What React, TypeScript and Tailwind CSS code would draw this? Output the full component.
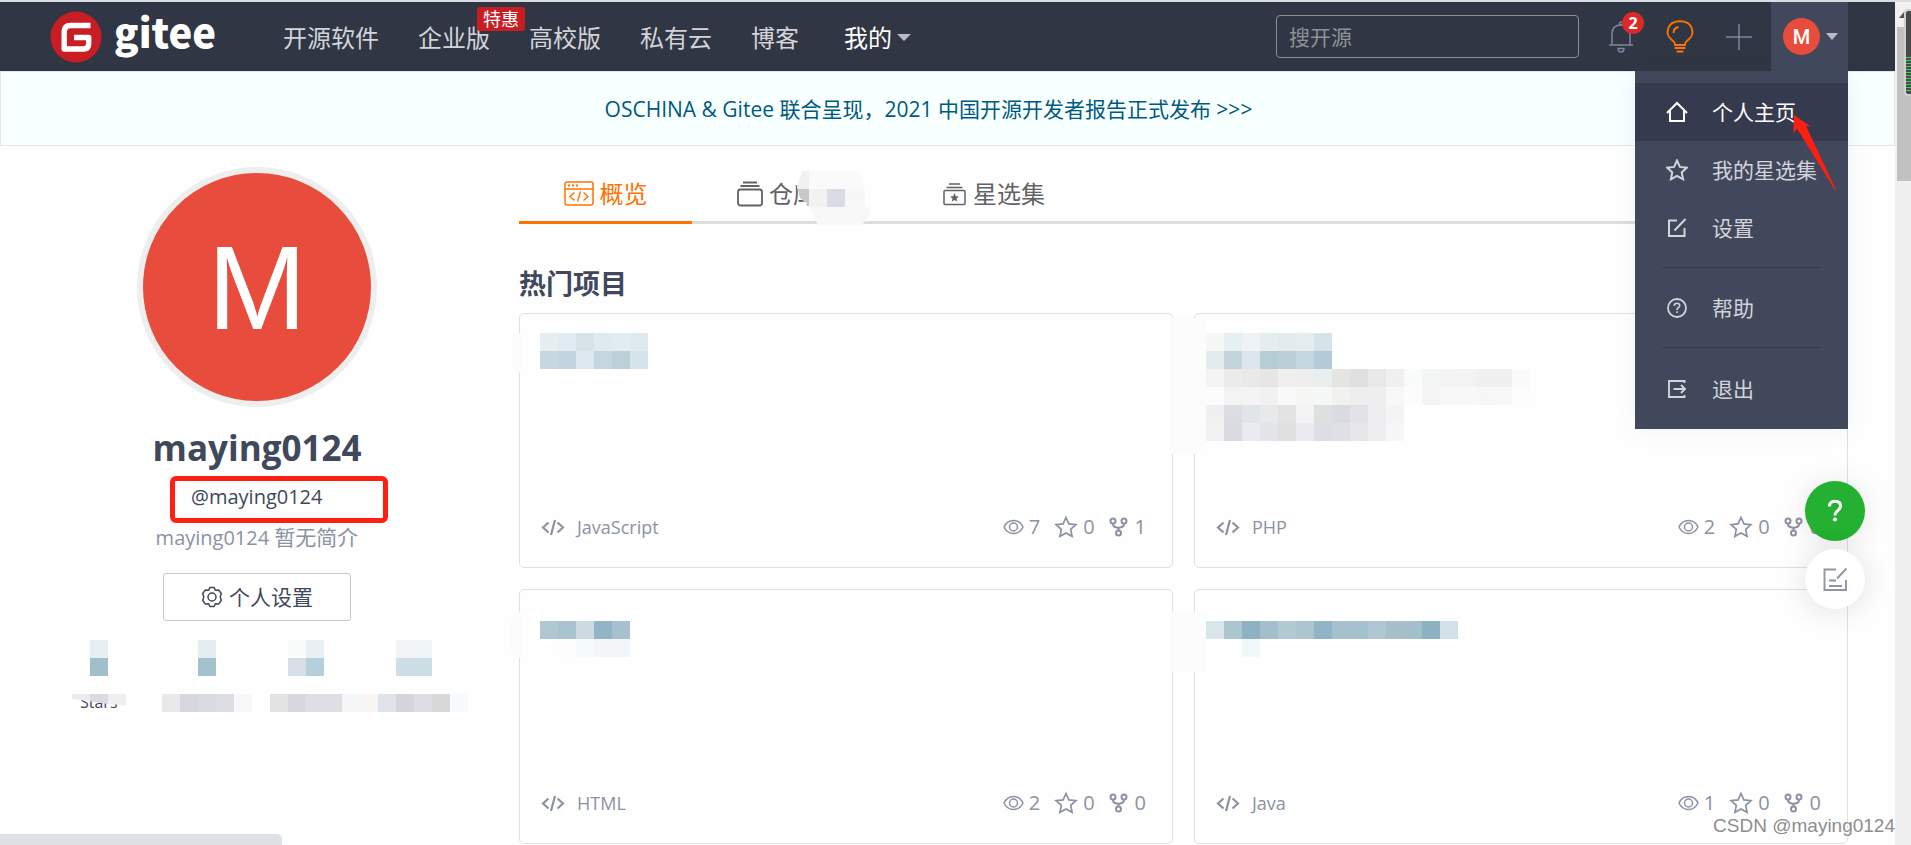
import type { ReactNode } from "react";

type Cell = string | null;

function Svg({ w, h, box, className, children }: { w: number; h: number; box?: string; className?: string; children: ReactNode }) {
  return (
    <svg
      width={w}
      height={h}
      viewBox={box ?? `0 0 ${w} ${h}`}
      fill="none"
      stroke="currentColor"
      strokeWidth="2"
      aria-hidden="true"
      className={className ? `shrink-0 ${className}` : "shrink-0"}
    >
      {children}
    </svg>
  );
}

const STAR = "M12 2.5 14.9 8.9 21.9 9.7 16.7 14.4 18.1 21.3 12 17.9 5.9 21.3 7.3 14.4 2.1 9.7 9.1 8.9Z";

function Mosaic({ rows }: { rows: Cell[][] }) {
  return (
    <div aria-hidden="true">
      {rows.map((row, r) => (
        <div key={r} className="flex h-[18px]">
          {row.map((c, i) => (
            <div key={i} className="size-[18px]" style={{ backgroundColor: c ?? "transparent" }} />
          ))}
        </div>
      ))}
    </div>
  );
}

function Caret({ className }: { className: string }) {
  return <span aria-hidden="true" className={`border-t-[7px] border-x-transparent border-t-[#b9bcc4] ${className}`} />;
}

function Header() {
  return (
    <header className="flex h-[69px] items-center bg-[#303643] px-[47px]">
      <a href="#home" aria-label="gitee" className="flex items-center gap-3 pl-[3px] text-white">
        <svg width="52" height="52" viewBox="0 0 52 52" aria-hidden="true" className="shrink-0">
          <circle cx="26" cy="26" r="25.5" fill="#c71d23" />
          <path
            d="M40.5 14.5H20.5Q14.2 14.5 14.2 21V38H33.5Q38.7 38 38.7 32.5V26.5H24"
            fill="none"
            stroke="#fff"
            strokeWidth="5.4"
            strokeLinejoin="round"
          />
        </svg>
        <span className="pb-3 font-['Noto_Sans_CJK_SC',sans-serif] text-[40px] leading-[52px] font-black">gitee</span>
      </a>
      <nav className="ml-[67px] flex items-center gap-[39px] pt-[2px] text-2xl leading-9 whitespace-nowrap text-[#d3d4d8]">
        <a href="#explore">开源软件</a>
        <a href="#enterprise" className="relative">
          企业版
          <span className="absolute -top-[13px] left-[59px] h-6 rounded-[3px] bg-[#c71d23] px-[6px] text-lg leading-6 text-white">特惠</span>
        </a>
        <a href="#education">高校版</a>
        <a href="#private">私有云</a>
        <a href="#blog">博客</a>
        <button type="button" className="flex items-center pl-[6px] text-white">
          我的
          <Caret className="ml-[5px] border-x-[7px]" />
        </button>
      </nav>
      <div className="ml-auto flex h-full items-center">
        <input
          type="search"
          aria-label="搜开源"
          placeholder="搜开源"
          className="h-[43px] w-[303px] rounded-[4px] border border-[#8b8e97] bg-transparent px-3 text-[21px] text-white placeholder:text-[#8f9299]"
        />
        <div className="ml-[29px] flex items-center gap-8">
          <button type="button" aria-label="通知" className="relative text-[#7d87a3]">
            <Svg w={26} h={32}>
              <path d="M1 24H25M4 24V13Q4 4 13 4Q22 4 22 13V24" strokeWidth="1.5" />
              <circle cx="13" cy="2.6" r="1.6" strokeWidth="1.3" />
              <path d="M10 27.5H16Q16 31 13 31Q10 31 10 27.5Z" strokeWidth="1.4" />
            </Svg>
            <span className="absolute -top-[9px] left-[14px] size-[22px] rounded-full bg-[#db2828] text-center text-base leading-[22px] font-bold text-white">2</span>
          </button>
          <button type="button" aria-label="灯泡" className="text-[#fe7300]">
            <Svg w={28} h={33}>
              <path d="M9 25Q9 22 5.5 19.5Q1.5 16 1.5 12.5Q2 1.5 14 1.2Q26 1.5 26.500 12.5Q26.5 16 22.5 19.5Q19 22 19 25Z" strokeWidth="1.8" />
              <path d="M7.5 13Q7.5 8 12.5 7M8.5 28H19.5M10.5 31.5H17.5" strokeWidth="2" />
            </Svg>
          </button>
          <button type="button" aria-label="新建" className="text-[#7d87a3]">
            <Svg w={26} h={26}>
              <path d="M13 0V26M0 13H26" strokeWidth="1.5" />
            </Svg>
          </button>
        </div>
        <div className="relative ml-[19px] h-full">
          <button type="button" aria-label="用户菜单" className="flex h-full w-[77px] items-center bg-[#41485c] pl-3">
            <span className="flex size-[37px] items-center justify-center rounded-full bg-[#e84c3d] font-[Roboto,sans-serif] text-xl font-medium text-white">M</span>
            <Caret className="ml-[6px] border-x-[6px]" />
          </button>
          <UserMenu />
        </div>
      </div>
    </header>
  );
}

function MenuItem({ icon, label, active }: { icon: ReactNode; label: string; active?: boolean }) {
  return (
    <li>
      <a
        href="#menu"
        className={`flex h-[58px] items-center gap-6 pl-[31px] text-[21px] leading-8 ${active ? "bg-[#363a4e] text-white" : "text-[#d2d4da]"}`}
      >
        {icon}
        {label}
      </a>
    </li>
  );
}

function UserMenu() {
  return (
    <ul className="absolute top-full right-0 z-20 w-[213px] bg-[#41485c] pt-3 pb-[11px] shadow-[0_2px_24px_rgba(0,80,80,0.06)]">
      <MenuItem
        active
        label="个人主页"
        icon={
          <Svg w={22} h={22}>
            <path d="M1 12 11 2 21 12M4 10V20H18V10" strokeWidth="2" />
          </Svg>
        }
      />
      <MenuItem
        label="我的星选集"
        icon={
          <Svg w={22} h={22} box="1 1 22 22">
            <path d={STAR} strokeWidth="2" />
          </Svg>
        }
      />
      <MenuItem
        label="设置"
        icon={
          <Svg w={22} h={22}>
            <path d="M11 3.500H3V19H18.500V11M8.500 13.500 19.500 2" strokeWidth="2" />
          </Svg>
        }
      />
      <li className="mx-[27px] my-[11px] mt-[10px] h-px bg-[#363b4d]" />
      <MenuItem
        label="帮助"
        icon={
          <Svg w={22} h={22}>
            <circle cx="11" cy="11" r="9" strokeWidth="1.8" />
            <path d="M8.200 9Q8.300 6.300 11 6.300Q13.800 6.400 13.700 8.700Q13.600 10 12.200 10.700Q11 11.400 11 13M11 14.300V16" strokeWidth="1.6" />
          </Svg>
        }
      />
      <li className="mx-[27px] mt-[10px] mb-3 h-px bg-[#363b4d]" />
      <MenuItem
        label="退出"
        icon={
          <Svg w={22} h={22}>
            <path d="M18.500 5V3H3V19H18.500V17M7.500 11H19M15 7 19 11 15 15" strokeWidth="1.9" />
          </Svg>
        }
      />
      <svg width="44" height="80" viewBox="0 0 44 80" aria-hidden="true" className="absolute top-[43px] left-[158px]">
        <path d="M1 1 17.500 12.500 13 12 43.500 77 41 74.500 4 14.500 0.500 19.500Z" fill="#ff1f10" />
      </svg>
    </ul>
  );
}

const STATS: Cell[][][] = [
  [[null, "#e7eff1"], [null, "#a1bfcb"], [], []],
  [
    [null, null, "#e6eef0"],
    [null, null, "#a4c1cd"],
    [],
    ["#e9e9eb", "#d7d8df", "#d8dcdf", "#dddee2", "#f7f8f9"],
  ],
  [
    [null, "#fafcfc", "#e7f0f2"],
    [null, "#d7dfe6", "#b5cfdb"],
    [],
    ["#e1e3e5", "#d7d8dc", "#dedfe3", "#dedfe3", "#f5f6f8", "#faf5f5"],
  ],
  [
    [null, "#f1f5f6", "#f0f5f8"],
    [null, "#cddee5", "#cddfe5"],
    [],
    ["#e0e4ea", "#d5d6da", "#dddee2", "#d8d8da", "#f6fafd"],
  ],
];

function Profile() {
  return (
    <aside className="w-[420px] shrink-0 pt-[21px]">
      <div className="flex flex-col items-center">
        <div className="flex size-60 items-center justify-center rounded-full border-[6px] border-[#eeeeee] bg-[#e84c3d] font-['Liberation_Sans',sans-serif] text-[119px] leading-none text-white">M</div>
        <h1 className="mt-[18px] text-[35px] leading-[46px] font-bold text-[#40485b]">maying0124</h1>
      </div>
      <div className="mt-[5px] ml-[123px] flex h-[47px] w-[218px] items-center rounded-[6px] border-[5px] border-[#ff1f10] pb-[5px] pl-4 text-xl leading-6 text-[#40485b]">
        @maying0124
      </div>
      <p className="text-center text-xl leading-7 text-[#8c92a4]">
        maying0124 <span className="text-[21px]">暂无简介</span>
      </p>
      <div className="mt-[21px] flex justify-center">
        <button type="button" className="flex h-12 w-[188px] items-center justify-center gap-[6px] rounded-[3px] border border-[#c8c9cc] text-[21px] text-[#40485b]">
          <Svg w={22} h={22}>
            <path
              d="M8.800 1.500H13.200L14.300 4.300L17.500 3.900L20.300 7.500L19.200 10.900L20.300 14.500L17.500 18.100L14.300 17.700L13.200 20.500H8.800L7.700 17.700L4.500 18.100L1.700 14.500L2.800 10.900L1.700 7.500L4.500 3.900L7.700 4.300Z"
              strokeWidth="1.5"
              strokeLinejoin="round"
            />
            <circle cx="11" cy="11" r="4" strokeWidth="1.5" />
          </Svg>
          <span className="pt-[2px]">个人设置</span>
        </button>
      </div>
      <div className="mt-[19px] ml-[25px] grid grid-cols-[90px_108px_108px_90px]">
        {STATS.map((rows, i) => (
          <div key={i} className="relative">
            <Mosaic rows={rows} />
            {i === 0 && (
              <>
                <span className="absolute top-[51px] left-2 text-base leading-[22px] text-[#40485b]">Stars</span>
                <div aria-hidden="true" className="absolute top-[54px] left-0 flex h-3 [clip-path:polygon(0_0,100%_0,100%_95%,60%_80%,0_40%)]">
                  <div className="w-[18px] bg-[#ececee]" />
                  <div className="w-[18px] bg-[#dadadf]" />
                  <div className="w-[18px] bg-[#efeff1]" />
                </div>
              </>
            )}
          </div>
        ))}
      </div>
    </aside>
  );
}

function Tabs() {
  return (
    <div role="tablist" className="mt-[19px] flex h-[59px] border-b-[3px] border-[#dcdddd] text-2xl text-[#606266]">
      <button type="button" role="tab" aria-selected="true" className="-mb-[3px] flex w-[173px] items-center justify-center gap-[6px] border-b-[3px] border-[#fe7300] pt-[2px] text-[#fe7300]">
        <Svg w={30} h={26}>
          <rect x="1" y="1" width="28" height="23" rx="2" strokeWidth="1.5" />
          <path d="M1 8H29" strokeWidth="1.5" />
          <path d="M4 4.500H6M8 4.500H10M12 4.500H14" strokeWidth="1.800" />
          <path d="M10.500 11.500 6 15.500 10.500 19.500M19.500 11.500 24 15.500 19.500 19.500M16.500 10.500 13.500 20.500" strokeWidth="1.400" />
        </Svg>
        概览
      </button>
      <button type="button" role="tab" aria-selected="false" className="relative flex w-[207px] items-center gap-[6px] pt-[2px] pl-[45px]">
        <Svg w={26} h={26}>
          <path d="M6 1.500H20M3.500 5H22.500" strokeWidth="1.800" />
          <rect x="1" y="8.500" width="24" height="16" rx="2.500" strokeWidth="1.800" />
        </Svg>
        仓库
        <span aria-hidden="true" className="absolute top-[6px] left-[105px] h-[54px] w-[74px] overflow-hidden [clip-path:polygon(8%_0,85%_0,92%_40%,92%_67%,100%_67%,98%_82%,88%_100%,28%_100%,14%_60%,4%_50%,0_28%)]">
          <span className="flex h-[18px] bg-[#fafafa]">
            <span className="w-3 bg-[#f1f1f1]" />
          </span>
          <span className="flex h-[18px] bg-[#f7f7f7]">
            <span className="w-3 bg-[#c8c8c9]" />
            <span className="w-[18px] bg-[#f2f2f2]" />
            <span className="w-[18px] bg-[#d9dce5]" />
          </span>
          <span className="flex h-[18px] bg-[#f8f8f8]" />
        </span>
      </button>
      <button type="button" role="tab" aria-selected="false" className="flex items-center gap-[7px] px-[44px] pt-[2px]">
        <Svg w={23} h={24}>
          <path d="M6 2H17M3.500 5.500H19.500" strokeWidth="1.500" />
          <rect x="1" y="8.500" width="21" height="14" rx="1" strokeWidth="1.500" />
          <path d="M11.500 11 12.800 14.200 16 14.400 13.500 16.500 14.300 19.600 11.500 17.900 8.700 19.600 9.500 16.500 7 14.400 10.200 14.200Z" fill="currentColor" strokeWidth="0" />
        </Svg>
        星选集
      </button>
    </div>
  );
}

type Project = { lang: string; watch: number; star: number; fork: number; pad: string; veil: string; rows: Cell[][] };

const PROJECTS: Project[] = [
  {
    lang: "JavaScript",
    watch: 7,
    star: 0,
    fork: 1,
    pad: "pt-[19px] pl-5",
    veil: "top-[19px] -left-2 h-10 w-[10px] rounded-l-full",
    rows: [
      ["#e7eef1", "#e2ebf1", "#d8e3e9", "#deeaef", "#e2ebf1", "#deeaef"],
      ["#c7d7df", "#c1d4df", "#dde9ee", "#c5d7de", "#bdd0d8", "#d5e3ea"],
    ],
  },
  {
    lang: "PHP",
    watch: 2,
    star: 0,
    fork: 0,
    pad: "pt-[19px] pl-[11px]",
    veil: "top-[4px] -left-[25px] h-[136px] w-9",
    rows: [
      ["#f6f7f9", "#e6eff2", "#eef3f6", "#e6edf0", "#e3eaec", "#e5edef", "#d6e4ea"],
      ["#e3ebed", "#c3d4dc", "#dde5ee", "#b7cdd6", "#bccfd9", "#c5d7de", "#b3cbd9", "#fdfffe"],
      ["#f3f3f3", "#ebebeb", "#e9e9e9", "#e6e6e6", "#efefef", "#eeeeec", "#e9eeee", "#e5e5e2", "#dfe1e0", "#e8e8e8", "#f0f0f0", "#fafcfb", "#f4f5f5", "#f4f4f4", "#f3f3f3", "#f0f0f0", "#f0f0f0", "#fafafa"],
      ["#fcfcfc", "#f3f3f3", "#f4f4f4", "#f1f1f1", "#f9f9f9", "#f6f6f4", "#f6f8f7", "#f1f1ef", "#eeeeee", "#eeeeee", "#f8f8f8", "#fcfcfc", "#f5f5f5", "#f8f8f8", "#f8f8f8", "#f7f7f7", "#f8f8f8", "#fdfdfc"],
      ["#eff0f2", "#dcdde2", "#e0e5e8", "#e8e9eb", "#e3e3e5", "#f3f3f5", "#dedfe0", "#dadbe0", "#e2e3e8", "#edeef0", "#f4f4f4"],
      ["#f2f2f2", "#dadbe0", "#eaebf0", "#e4e5e9", "#e0e0e1", "#eaebef", "#dddee3", "#dfe0e5", "#e7e7e9", "#eeeef0", "#f6f7f9"],
    ],
  },
  {
    lang: "HTML",
    watch: 2,
    star: 0,
    fork: 0,
    pad: "pt-[31px] pl-5",
    veil: "top-[22px] -left-[10px] h-[46px] w-3 rounded-l-full",
    rows: [
      ["#b1c7d2", "#a7c3cf", "#cfdae0", "#91b5c6", "#a6c1cd"],
      ["#fefefe", "#fdfdfd", "#f5fafb", "#f2f6f8", "#f2f6f8"],
    ],
  },
  {
    lang: "Java",
    watch: 1,
    star: 0,
    fork: 0,
    pad: "pt-[31px] pl-[11px]",
    veil: "top-[22px] -left-[25px] h-[60px] w-9",
    rows: [
      ["#d9e6eb", "#adc5cf", "#8eb2c3", "#a2bfcb", "#b4cad3", "#adc5d1", "#91b4c6", "#a4c1cd", "#a4c1cd", "#afc6d3", "#a7becb", "#a3bfcb", "#8cb1c3", "#d2e0e7"],
      [null, null, "#f2f7f8"],
    ],
  },
];

function ProjectCard({ p }: { p: Project }) {
  return (
    <article className="relative flex h-[255px] flex-col justify-between rounded-[5px] border border-[#dce1e6]">
      <div aria-hidden="true" className={`absolute bg-[#fcfcfc] ${p.veil}`} />
      <div className={`relative ${p.pad}`}>
        <Mosaic rows={p.rows} />
      </div>
      <footer className="flex items-center pr-[26px] pb-7 pl-[21px] text-xl leading-6 text-[#8c92a4]">
        <Svg w={24} h={18}>
          <path d="M7.500 4.500 2 9.500 7.500 14.500M16.500 4.500 22 9.500 16.500 14.500M14 2 10 17" strokeWidth="2.200" />
        </Svg>
        <span className="ml-3 text-lg leading-6">{p.lang}</span>
        <ul className="ml-auto flex items-center gap-[14px]">
          <li className="flex items-center gap-[5px]">
            <Svg w={21} h={16}>
              <path d="M1 8Q4 1.500 10.500 1.500Q17 1.500 20 8Q17 14.500 10.500 14.500Q4 14.500 1 8Z" strokeWidth="1.500" />
              <circle cx="10.500" cy="8" r="4" strokeWidth="1.500" />
            </Svg>
            {p.watch}
          </li>
          <li className="flex items-center gap-[5px]">
            <Svg w={24} h={24}>
              <path d={STAR} strokeWidth="1.700" />
            </Svg>
            {p.star}
          </li>
          <li className="flex items-center gap-[7px]">
            <Svg w={19} h={20}>
              <circle cx="4" cy="4" r="2.500" />
              <circle cx="15" cy="4" r="2.500" />
              <circle cx="9.500" cy="16" r="2.500" />
              <path d="M4 6.500Q4 10 7 10.200L9.500 11V13.500M15 6.500Q15 10 12 10.200L9.500 11" />
            </Svg>
            {p.fork}
          </li>
        </ul>
      </footer>
    </article>
  );
}

function FloatingTools() {
  return (
    <div className="absolute top-[479px] right-[30px] z-10 flex flex-col gap-2">
      <button type="button" aria-label="帮助" className="flex size-[60px] items-center justify-center rounded-full bg-[#24b030] text-white shadow-[0_2px_30px_rgba(0,0,0,0.1)]">
        <Svg w={18} h={26}>
          <path d="M3.500 8.500Q3.500 3.300 9 3.300Q14.500 3.300 14.500 7.800Q14.500 10.200 12 12.300Q9 14.800 9 17.500" strokeWidth="3" />
          <circle cx="9" cy="21.500" r="2.100" fill="currentColor" strokeWidth="0" />
        </Svg>
      </button>
      <button type="button" aria-label="反馈" className="flex size-[60px] items-center justify-center rounded-full bg-white text-[#9094a6] shadow-[0_2px_30px_rgba(0,0,0,0.12)]">
        <Svg w={26} h={26}>
          <path d="M14 3.500H2.500V24H24V14M15 12.500 24.500 2.500M7 14.500H14M7 20H20" strokeWidth="1.900" />
        </Svg>
      </button>
    </div>
  );
}

function ScrollRail() {
  return (
    <div aria-hidden="true" className="relative flex w-4 shrink-0 flex-col bg-[#f0f0f0] pl-[2px]">
      <div className="flex h-[25px] items-center justify-center">
        <span className="border-x-[5px] border-b-[6px] border-x-transparent border-b-[#505050]" />
      </div>
      <div className="h-[154px] bg-[#c1c1c1]" />
      <div className="absolute top-[7px] right-0 h-[87px] w-[7px] rounded-l-[4px] border-y-2 border-l-2 border-[#d0d0d0] bg-[#4a4a4a] pt-[46px]">
        <div className="h-[36px] bg-[repeating-linear-gradient(to_bottom,#37d058_0_1px,#4a4a4a_1px_3px)]" />
      </div>
    </div>
  );
}

export default function App() {
  return (
    <div className="relative flex min-h-screen flex-col bg-[#fefefe] font-['Open_Sans','Noto_Sans_CJK_SC',sans-serif]">
      <div className="h-[2px] bg-[#d9dde1]" />
      <div className="relative flex flex-1">
        <div className="min-w-0 flex-1">
          <Header />
          <a href="#report" className="flex h-[75px] items-center justify-center border border-[#e3e8ed] bg-[#f7ffff] pt-[2px] pr-[38px] text-[21px] text-[#005980]">
            OSCHINA &amp; Gitee 联合呈现，2021 中国开源开发者报告正式发布 &gt;&gt;&gt;
          </a>
          <div className="flex gap-[52px] px-[47px]">
            <Profile />
            <main className="min-w-0 flex-1">
              <Tabs />
              <h2 className="mt-[42px] text-[27px] leading-9 font-bold text-[#40485b]">热门项目</h2>
              <div className="mt-[11px] grid grid-cols-2 gap-[21px]">
                {PROJECTS.map((p) => (
                  <ProjectCard key={p.lang} p={p} />
                ))}
              </div>
            </main>
          </div>
        </div>
        <ScrollRail />
        <div className="absolute top-0 right-4">
          <FloatingTools />
        </div>
      </div>
      <div aria-hidden="true" className="absolute bottom-0 left-0 h-[11px] w-[282px] rounded-tr-[5px] bg-[#dfe2e5]" />
      <span className="absolute right-4 bottom-[9px] z-10 font-['Liberation_Sans',sans-serif] text-[19px] leading-5 text-[#8d8d8d] [text-shadow:1px_1px_0_#fff,-1px_-1px_0_#fff]">
        CSDN @maying0124
      </span>
    </div>
  );
}
